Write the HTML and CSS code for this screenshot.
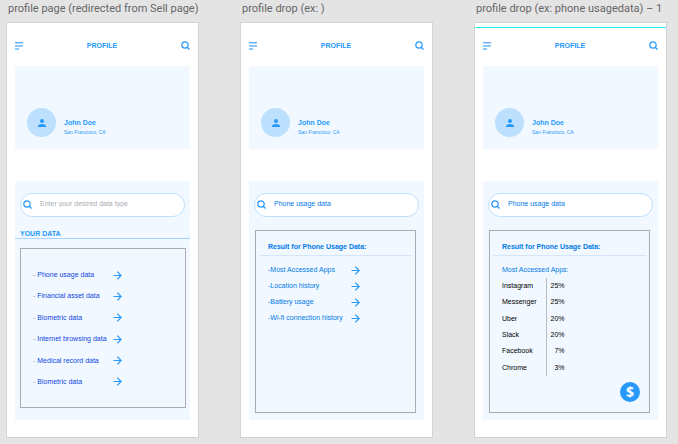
FILE: index.html
```html
<!DOCTYPE html>
<html lang="en">
<head>
<meta charset="utf-8">
<title>Profile artboards</title>
<link rel="stylesheet" href="styles.css">
</head>
<body>
<svg class="defs" aria-hidden="true">
  <symbol id="menu" viewBox="0 0 8 8"><path fill="#5db2fd" d="M0 0h8v1H0z"/><path fill="#bfe0fd" d="M0 1h8v1H0z"/><path fill="#8fcafd" d="M0 3h8v2H0z"/><path fill="#8fcafd" d="M0 6h4v2H0z"/></symbol>
  <symbol id="search" viewBox="0 0 9 9"><circle cx="4" cy="4" r="3.2" fill="none" stroke="currentColor" stroke-width="1.2"/><path d="M6.2 6.2 8.5 8.5" stroke="currentColor" stroke-width="1.3"/></symbol>
  <symbol id="arrow" viewBox="0 0 9 9"><path d="M0.5 4.5h7.6M4.3 0.7 8.1 4.5 4.3 8.3" fill="none" stroke="currentColor" stroke-width="1.2"/></symbol>
  <symbol id="person" viewBox="0 0 8 8"><circle cx="4" cy="2" r="2"/><path d="M0 8V7c0-1.300 2.500-2 4-2s4 .7 4 2v1z"/></symbol>
</svg>
<main class="boards">
  <section class="column">
    <h2 class="label">profile page (redirected from Sell page)</h2>
    <article class="board">
      <header class="bar">
        <button class="icon" aria-label="Menu"><svg class="menu"><use href="#menu"/></svg></button>
        <h1>PROFILE</h1>
        <button class="icon" aria-label="Search"><svg class="glass"><use href="#search"/></svg></button>
      </header>
      <div class="hero">
        <span class="avatar"><svg><use href="#person"/></svg></span>
        <div><p class="name">John Doe</p><p class="place">San Francisco, CA</p></div>
      </div>
      <div class="panel">
        <label class="search"><svg class="glass"><use href="#search"/></svg><input type="text" aria-label="Data type" placeholder="Enter your desired data type"></label>
        <h3 class="heading">YOUR DATA</h3>
        <ul class="box types">
          <li><a href="#"><span>Phone usage data</span><svg class="arrow"><use href="#arrow"/></svg></a></li>
          <li><a href="#"><span>Financial asset data</span><svg class="arrow"><use href="#arrow"/></svg></a></li>
          <li><a href="#"><span>Biometric data</span><svg class="arrow"><use href="#arrow"/></svg></a></li>
          <li><a href="#"><span>Internet browsing data</span><svg class="arrow"><use href="#arrow"/></svg></a></li>
          <li><a href="#"><span>Medical record data</span><svg class="arrow"><use href="#arrow"/></svg></a></li>
          <li><a href="#"><span>Biometric data</span><svg class="arrow"><use href="#arrow"/></svg></a></li>
        </ul>
      </div>
    </article>
  </section>

  <section class="column">
    <h2 class="label">profile drop (ex: )</h2>
    <article class="board">
      <header class="bar">
        <button class="icon" aria-label="Menu"><svg class="menu"><use href="#menu"/></svg></button>
        <h1>PROFILE</h1>
        <button class="icon" aria-label="Search"><svg class="glass"><use href="#search"/></svg></button>
      </header>
      <div class="hero">
        <span class="avatar"><svg><use href="#person"/></svg></span>
        <div><p class="name">John Doe</p><p class="place">San Francisco, CA</p></div>
      </div>
      <div class="panel">
        <label class="search"><svg class="glass"><use href="#search"/></svg><input type="text" aria-label="Data type" value="Phone usage data"></label>
        <div class="box result">
          <h3>Result for Phone Usage Data:</h3>
          <ul class="links">
            <li><a href="#"><span>-Most Accessed Apps</span><svg class="arrow"><use href="#arrow"/></svg></a></li>
            <li><a href="#"><span>-Location history</span><svg class="arrow"><use href="#arrow"/></svg></a></li>
            <li><a href="#"><span>-Battery usage</span><svg class="arrow"><use href="#arrow"/></svg></a></li>
            <li><a href="#"><span>-Wi-fi connection history</span><svg class="arrow"><use href="#arrow"/></svg></a></li>
          </ul>
        </div>
      </div>
    </article>
  </section>

  <section class="column">
    <h2 class="label">profile drop (ex: phone usagedata) – 1</h2>
    <article class="board guided">
      <header class="bar">
        <button class="icon" aria-label="Menu"><svg class="menu"><use href="#menu"/></svg></button>
        <h1>PROFILE</h1>
        <button class="icon" aria-label="Search"><svg class="glass"><use href="#search"/></svg></button>
      </header>
      <div class="hero">
        <span class="avatar"><svg><use href="#person"/></svg></span>
        <div><p class="name">John Doe</p><p class="place">San Francisco, CA</p></div>
      </div>
      <div class="panel">
        <label class="search"><svg class="glass"><use href="#search"/></svg><input type="text" aria-label="Data type" value="Phone usage data"></label>
        <div class="box result">
          <h3>Result for Phone Usage Data:</h3>
          <table class="apps">
            <caption>Most Accessed Apps:</caption>
            <tbody>
              <tr><th scope="row">Instagram</th><td>25%</td></tr>
              <tr><th scope="row">Messenger</th><td>25%</td></tr>
              <tr><th scope="row">Uber</th><td>20%</td></tr>
              <tr><th scope="row">Slack</th><td>20%</td></tr>
              <tr><th scope="row">Facebook</th><td>7%</td></tr>
              <tr><th scope="row">Chrome</th><td>3%</td></tr>
            </tbody>
          </table>
          <button class="sell" aria-label="Sell data">$</button>
        </div>
      </div>
    </article>
  </section>
</main>
</body>
</html>
```

FILE: styles.css
```css
* { box-sizing: border-box; margin: 0; padding: 0; }

body {
  background: #e4e4e4;
  color: #2699fb;
  font: 7px/10px "Liberation Sans", Arial, sans-serif;
}

ul { list-style: none; }
a { color: inherit; text-decoration: none; }
svg { display: block; flex: none; }
button, input { border: 0; background: none; color: inherit; font: inherit; }
button { cursor: pointer; }

.defs { position: absolute; width: 0; height: 0; }

.boards {
  display: grid;
  grid-template-columns: repeat(3, minmax(0, 1fr));
  gap: 41px;
  padding: 0 11px 6px 6px;
}

.label {
  height: 22px;
  padding-left: 2px;
  color: #666;
  font: 11px/18px Roboto, "Open Sans", sans-serif;
  white-space: nowrap;
}

.board {
  position: relative;
  padding: 18px 8px 17px;
  background: #fff;
  border: 1px solid #d4d4d4;
}

.guided::before {
  content: "";
  position: absolute;
  inset: 4px 0 auto;
  height: 1px;
  background: #26eef2;
}

.bar {
  display: flex;
  align-items: flex-start;
  justify-content: space-between;
  height: 10px;
}

.bar h1 { font-size: 7px; }
.icon { display: block; }
.menu { width: 8px; height: 8px; }
.glass { width: 9px; height: 9px; }
.bar .menu { margin-top: 1px; }

.hero {
  display: flex;
  align-items: center;
  gap: 8px;
  height: 83px;
  margin: 15px 0 32px;
  padding: 30px 12px 0;
  background: #f1f8ff;
}

.avatar {
  display: grid;
  place-items: center;
  width: 29px;
  height: 29px;
  border-radius: 50%;
  background: #bce0fd;
  fill: #2699fb;
}

.avatar svg { width: 8px; height: 8px; }
.name { padding-top: 8px; font-weight: bold; }
.place { font-size: 5px; line-height: 8px; }

.panel {
  height: 239px;
  padding: 12px 5px 0;
  background: #f1f8ff;
}

.search {
  display: flex;
  align-items: center;
  gap: 8px;
  height: 24px;
  padding: 0 2px 2px;
  border: 1px solid #bce0fd;
  border-radius: 12px;
  background: #fff;
}

.search input { flex: 1; min-width: 0; height: 14px; color: #0078e6; line-height: 14px; outline: 0; }
.search input::placeholder { color: #a9aeb4; line-height: 14px; opacity: 1; }

.heading {
  margin: 13px -5px 0;
  padding-left: 5px;
  border-bottom: 1px solid #a6d4fb;
  font-size: 7px;
  line-height: 8px;
}

.box { border: 1px solid #a9adb0; }

.types {
  display: flex;
  flex-direction: column;
  justify-content: space-between;
  height: 160px;
  margin: 9px -1px 0 0;
  padding: 21px 12px 20px;
  color: #0f46e0;
}

.types a { display: grid; grid-template-columns: 80px 9px; align-items: center; }
.types span::before { content: "- "; color: #9aa3ad; }
.arrow { width: 9px; height: 9px; color: #2699fb; }

.result {
  position: relative;
  height: 183px;
  margin: 13px 3px 0 1px;
  padding: 11px 3px 0;
  color: #0078e6;
}

.result h3 {
  height: 14px;
  padding-left: 9px;
  border-bottom: 1px solid #d5e6fa;
  font-size: 7px;
}

.links { display: grid; gap: 6px; padding: 9px; }
.links a { display: grid; grid-template-columns: 83px 9px; align-items: center; }

.apps { height: 98px; margin: 9px 9px 0; border-collapse: collapse; }
.apps caption { padding-bottom: 3px; text-align: left; white-space: nowrap; }
.apps th { width: 44px; border-right: 1px solid #b9bdc1; text-align: left; font-weight: normal; color: #000; }
.apps td { width: 22px; padding-right: 4px; text-align: right; color: #000; }

.sell {
  position: absolute;
  right: 9px;
  bottom: 10px;
  width: 20px;
  height: 20px;
  border-radius: 50%;
  background: #2699fb;
  color: #fff;
  font: bold 14px/20px "Open Sans", sans-serif;
}
```
